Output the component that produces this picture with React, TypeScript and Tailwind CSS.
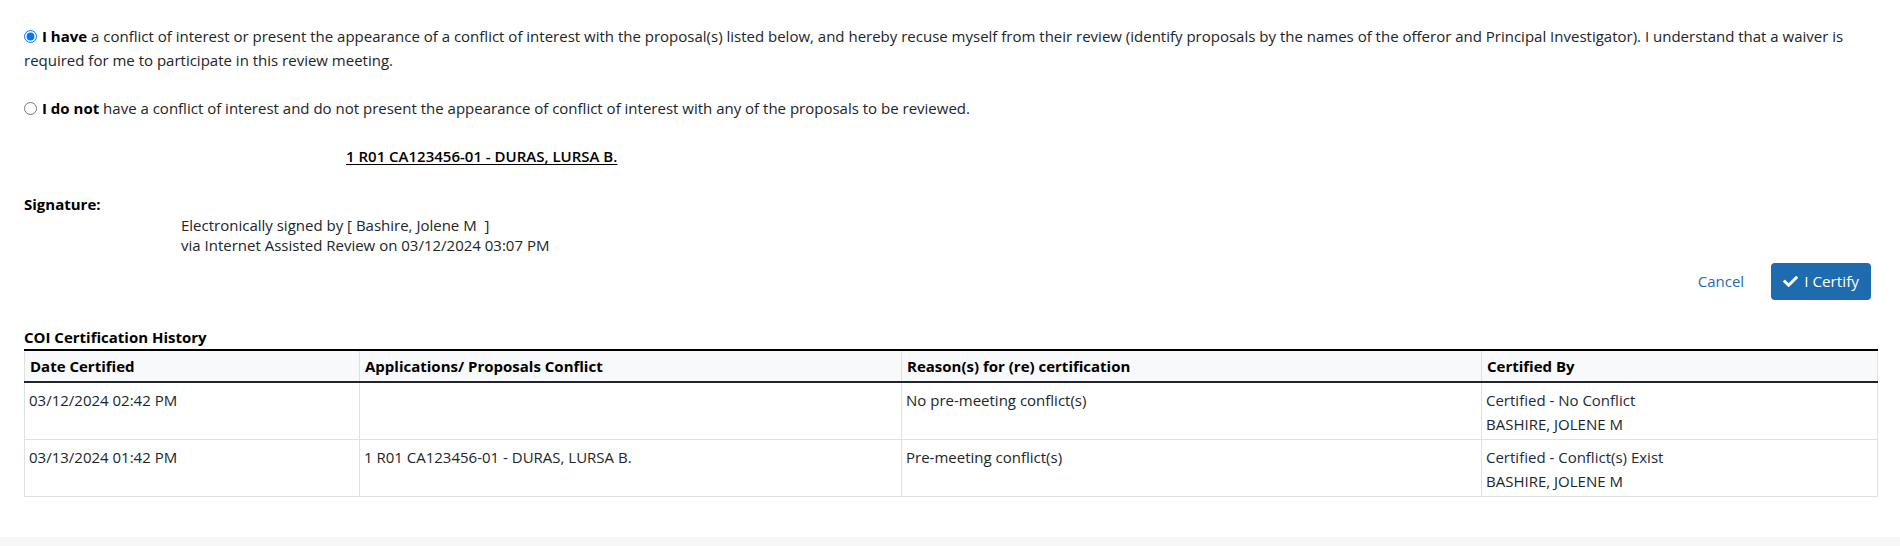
import { FaCheck } from "react-icons/fa";

const rows = [
  {
    date: "03/12/2024 02:42 PM",
    proposal: "",
    reason: "No pre-meeting conflict(s)",
    status: "Certified - No Conflict",
    by: "BASHIRE, JOLENE M",
  },
  {
    date: "03/13/2024 01:42 PM",
    proposal: "1 R01 CA123456-01 - DURAS, LURSA B.",
    reason: "Pre-meeting conflict(s)",
    status: "Certified - Conflict(s) Exist",
    by: "BASHIRE, JOLENE M",
  },
];

export default function App() {
  return (
    <div className="min-h-[546px] flex flex-col bg-white text-[15px] text-[#212529] font-['Open_Sans',sans-serif]">
      <div className="pl-6 pr-[22px] pt-6 flex-1">
        {/* conflict choice */}
        <div className="leading-6">
          <label className="block">
            <input type="radio" name="coi" defaultChecked className="w-[13px] h-[13px] m-0 mr-[5px] align-[-1px]" />
            <b className="font-bold text-black">I have</b> a conflict of interest or present the appearance of a conflict of interest with the proposal(s) listed below, and hereby recuse myself from their review (identify proposals by the names of the offeror and Principal Investigator). I understand that a waiver is required for me to participate in this review meeting.
          </label>
          <label className="block mt-6">
            <input type="radio" name="coi" className="w-[13px] h-[13px] m-0 mr-[5px] align-[-1px]" />
            <b className="font-bold text-black">I do not</b> have a conflict of interest and do not present the appearance of conflict of interest with any of the proposals to be reviewed.
          </label>
        </div>

        <div className="mt-6 pl-[322px] leading-6">
          <span className="font-semibold text-black underline underline-offset-2">1 R01 CA123456-01 - DURAS, LURSA B.</span>
        </div>

        <div className="mt-6 leading-6 font-bold text-black">Signature:</div>
        <div className="pl-[157px] leading-[19.5px]">
          <div>Electronically signed by [ Bashire, Jolene M&nbsp; ]</div>
          <div>via Internet Assisted Review on 03/12/2024 03:07 PM</div>
        </div>

        <div className="flex items-center justify-end gap-[27px] mt-2 pr-[7px]">
          <a href="#" className="text-[#1f6cb0]">Cancel</a>
          <button className="flex items-center gap-[6px] h-[37px] px-[12px] rounded bg-[#1e6bb0] text-white text-[15.3px]">
            <FaCheck className="w-[15px] h-[15px]" />
            I Certify
          </button>
        </div>

        <div className="mt-[25px] font-bold text-black leading-6">COI Certification History</div>
        <table className="w-full border-collapse table-fixed">
          <colgroup>
            <col className="w-[335px]" />
            <col className="w-[542px]" />
            <col className="w-[580px]" />
            <col />
          </colgroup>
          <thead>
            <tr className="bg-[#f8f9fa] border-t-2 border-t-black border-b-2 border-b-[#212529]">
              {["Date Certified", "Applications/ Proposals Conflict", "Reason(s) for (re) certification", "Certified By"].map((h) => (
                <th key={h} className="text-left font-bold text-black h-[32px] pl-[5px] border-x border-x-[#dee2e6]">
                  {h}
                </th>
              ))}
            </tr>
          </thead>
          <tbody>
            {rows.map((r) => (
              <tr key={r.date} className="border-b border-[#dee2e6] align-top">
                <td className="pl-1 pt-[5px] pb-[3px] leading-6 border-x border-[#dee2e6]">{r.date}</td>
                <td className="pl-1 pt-[5px] leading-6 border-x border-[#dee2e6]">{r.proposal}</td>
                <td className="pl-1 pt-[5px] leading-6 border-x border-[#dee2e6]">{r.reason}</td>
                <td className="pl-1 pt-[5px] pb-[3px] leading-6 border-x border-[#dee2e6]">
                  <div className="text-[#1c2b3b]">{r.status}</div>
                  <div>{r.by}</div>
                </td>
              </tr>
            ))}
          </tbody>
        </table>
      </div>
      <div className="h-[9px] mt-10 bg-[#f7f7f8]" />
    </div>
  );
}
